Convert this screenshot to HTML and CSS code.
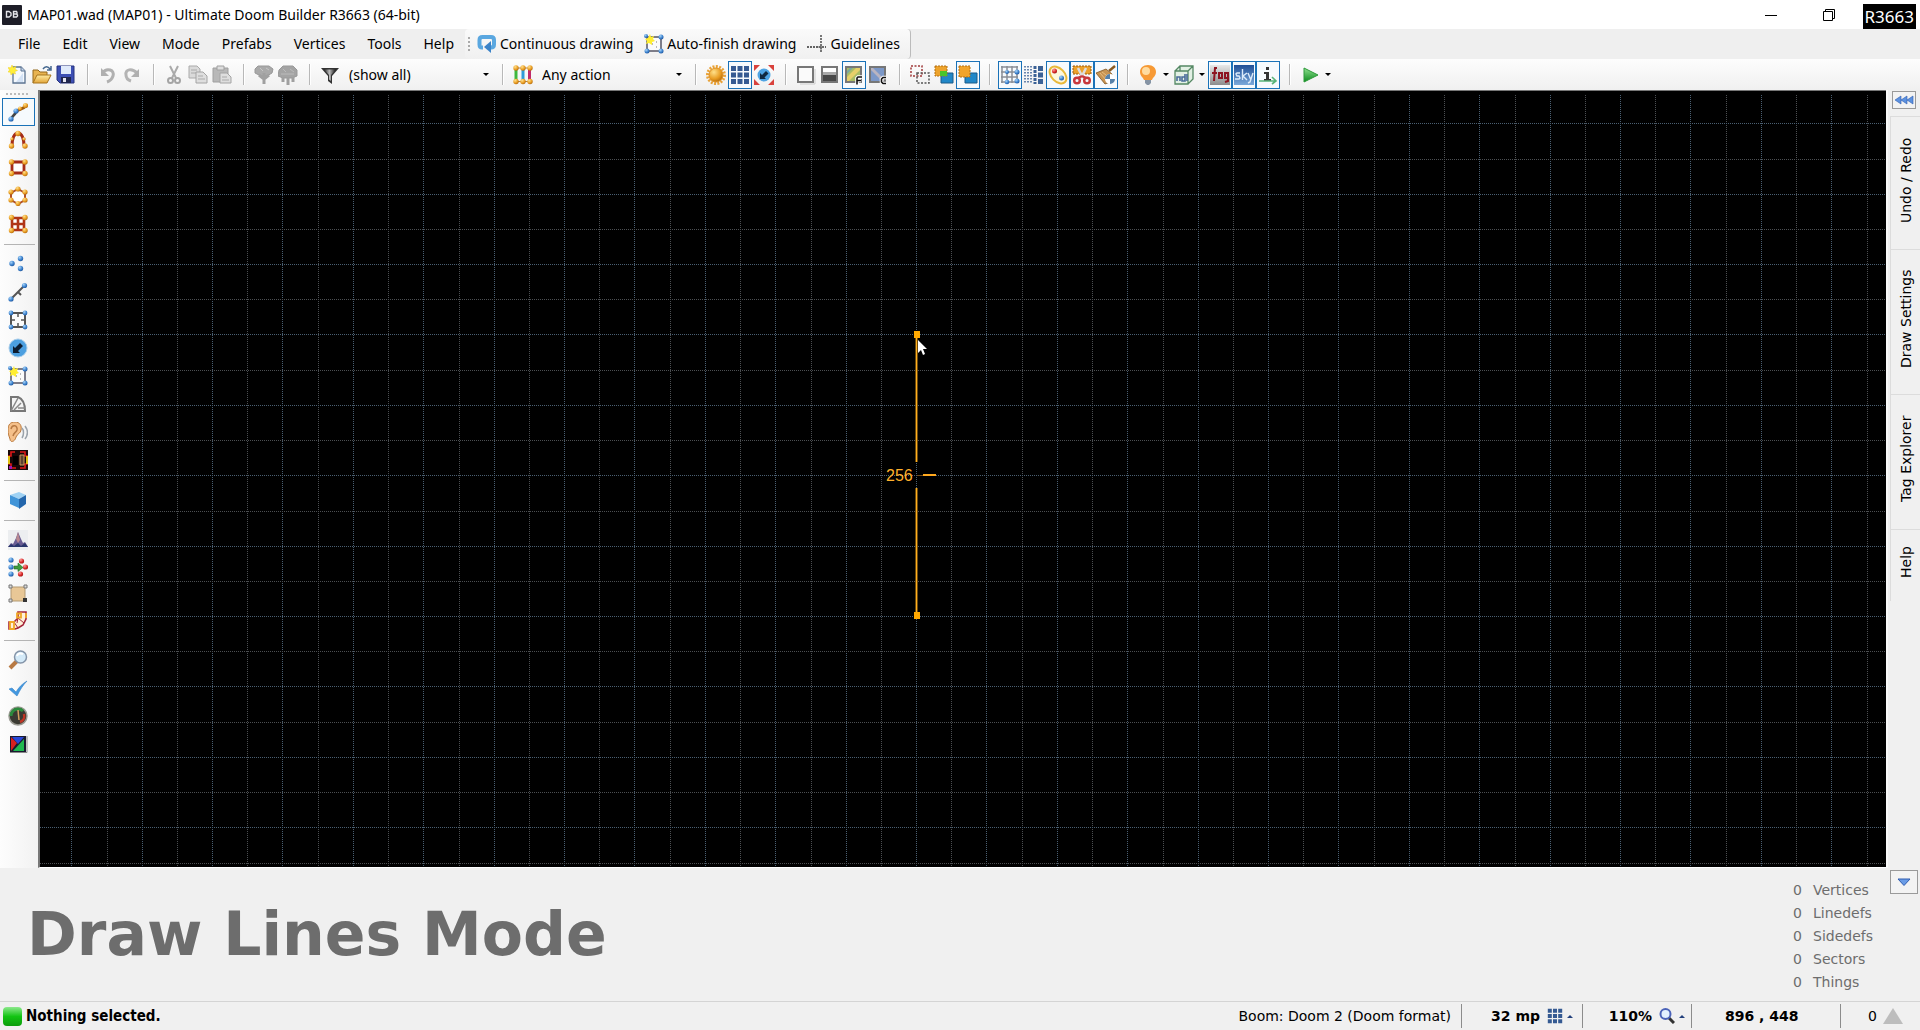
FILE: index.html
```html
<!DOCTYPE html>
<html lang="en">
<head>
<meta charset="utf-8">
<title>MAP01.wad (MAP01) - Ultimate Doom Builder R3663 (64-bit)</title>
<link rel="stylesheet" href="styles.css">
</head>
<body>
<svg class="sprite" aria-hidden="true">
  <defs>
    <radialGradient id="ball" cx=".35" cy=".3" r=".8"><stop offset="0" stop-color="#a8d4f8"/><stop offset=".6" stop-color="#3a80cc"/><stop offset="1" stop-color="#1c4f94"/></radialGradient>
    <radialGradient id="gold" cx=".35" cy=".3" r=".8"><stop offset="0" stop-color="#ffe08a"/><stop offset=".6" stop-color="#e89c22"/><stop offset="1" stop-color="#a86008"/></radialGradient>
    <radialGradient id="red" cx=".35" cy=".3" r=".8"><stop offset="0" stop-color="#ff9c9c"/><stop offset=".6" stop-color="#d82828"/><stop offset="1" stop-color="#901010"/></radialGradient>
    <linearGradient id="sky" x2="0" y2="1"><stop offset="0" stop-color="#1f4f96"/><stop offset="1" stop-color="#7ba9da"/></linearGradient>
    <linearGradient id="fog" x2="0" y2="1"><stop offset="0" stop-color="#e8e8e8"/><stop offset="1" stop-color="#8c8c8c"/></linearGradient>
    <linearGradient id="play" x2="0" y2="1"><stop offset="0" stop-color="#8fe08f"/><stop offset="1" stop-color="#0b8a1c"/></linearGradient>
    <linearGradient id="folder" x2="0" y2="1"><stop offset="0" stop-color="#ffeaa0"/><stop offset="1" stop-color="#e3a63a"/></linearGradient>
    <linearGradient id="funnel" x2="1"><stop offset="0" stop-color="#222"/><stop offset=".45" stop-color="#bbb"/><stop offset="1" stop-color="#111"/></linearGradient>
  </defs>
  <symbol id="i-new" viewBox="0 0 20 20"><path d="M5 2h8l4 4v12H5z" fill="#f4f8fd" stroke="#5b7391" stroke-width="1.3"/><path d="M13 2v4h4" fill="#c4d4e8" stroke="#5b7391"/><path d="M15 8v9H8z" fill="#d3e2f5"/><path d="M4 0l1.200 2.600L8 1.500 7 4.200 9.500 5.500 6.800 6.500 7.500 9 4.600 8 3 10 2.500 7.200 0 7l1.600-2L0 2.600l2.800.2z" fill="#ffef3a" stroke="#f0d020" stroke-width=".5"/></symbol>
  <symbol id="i-open" viewBox="0 0 20 20"><path d="M1 18V5h5l2 2h7v3" fill="#e8b350" stroke="#93681c"/><path d="M1 18l4-8h14l-4 8z" fill="url(#folder)" stroke="#a8741c"/><path d="M11 4c2-3 5-3 7 0M19 1v4h-4" fill="none" stroke="#44678f" stroke-width="1.500"/></symbol>
  <symbol id="i-save" viewBox="0 0 20 20"><path d="M1 1h17v17H4l-3-3z" fill="#3d4fb4" stroke="#27337e"/><path d="M5 1h10v8H5z" fill="#dfe9fa"/><path d="M5 12h10v6H5z" fill="#20264e"/><path d="M7 13h3v4H7z" fill="#e6e6f0"/></symbol>
  <symbol id="i-undo" viewBox="0 0 20 20"><path d="M4 8c5-6 13-3 11 3-1 3-3 5-6 6" fill="none" stroke="#b0b0b0" stroke-width="3"/><path d="M3 3v8h8z" fill="#b0b0b0"/></symbol>
  <symbol id="i-redo" viewBox="0 0 20 20"><path d="M15 8C10 3 3 4 4 10c0 3 2 5 5 6" fill="none" stroke="#b4b4b4" stroke-width="3"/><path d="M17 4v8H9z" fill="#b0b0b0"/></symbol>
  <symbol id="i-cut" viewBox="0 0 20 20"><path d="M6 1l6 12M14 1L8 13" stroke="#aaa" stroke-width="2"/><g fill="none" stroke="#a4a4a4" stroke-width="2"><circle cx="6.500" cy="15.500" r="2.500"/><circle cx="13.500" cy="15.500" r="2.500"/></g></symbol>
  <symbol id="i-copy" viewBox="0 0 20 20"><path d="M1 1h8l3 3v9H1z" fill="#dadada" stroke="#aaa"/><path d="M3 5h6M3 8h5" stroke="#aaa"/><path d="M8 7h7l4 4v7H8z" fill="#dedede" stroke="#a4a4a4"/><path d="M10 11h5M10 14h7" stroke="#aaa"/></symbol>
  <symbol id="i-paste" viewBox="0 0 20 20"><path d="M1 3h15v14H1z" fill="#b8b8b8" stroke="#a0a0a0"/><path d="M5 1h7v4H5z" fill="#ddd" stroke="#a0a0a0"/><path d="M8 8h7l4 4v6H8z" fill="#dedede" stroke="#a4a4a4"/><path d="M10 12h5M10 15h7" stroke="#aaa"/></symbol>
  <symbol id="i-tree" viewBox="0 0 20 20"><path d="M1 4l3-3h11l4 3-1 4-5 3h-6L1 8z" fill="#a9a9a9" stroke="#999"/><path d="M5 10l5 4 5-4M10 8v11" fill="none" stroke="#a0a0a0" stroke-width="3"/><path d="M6 3l3 3M12 3l3 2" stroke="#c6c6c6"/></symbol>
  <symbol id="i-trees" viewBox="0 0 20 20"><path d="M1 5l4-4h10l4 4v6l-5 2H5L0 11z" fill="#a4a4a4" stroke="#999"/><path d="M5 12v5M10 12v8M15 12v5" stroke="#a0a0a0" stroke-width="3"/><path d="M5 4l3 3M12 4l4 3M3 9h13" stroke="#bbb"/></symbol>
  <symbol id="i-filter" viewBox="0 0 20 20"><path d="M1 3h18l-7 8v8l-4-3v-5z" fill="#333"/><path d="M4 4.500h12L11 10v6l-2-1.500V10z" fill="url(#funnel)"/></symbol>
  <symbol id="i-action" viewBox="0 0 20 20"><path d="M3 3v14" stroke="#3eb83e" stroke-width="3"/><path d="M10 3v14" stroke="#2f9ad8" stroke-width="3"/><path d="M16.500 3v14" stroke="#c02a6a" stroke-width="3"/><path d="M3 3h14M3 16.500h14" stroke="#b08040"/><g fill="url(#gold)"><circle cx="3" cy="3" r="2.700"/><circle cx="10" cy="3" r="2.700"/><circle cx="17" cy="3" r="2.700"/><circle cx="3" cy="16.500" r="2.700"/><circle cx="10" cy="16.500" r="2.700"/><circle cx="17" cy="16.500" r="2.700"/></g></symbol>
  <symbol id="i-sun" viewBox="0 0 20 20"><circle cx="10" cy="10" r="8.500" fill="none" stroke="#e8a33a" stroke-width="3" stroke-dasharray="2 1.300"/><circle cx="10" cy="10" r="7" fill="url(#gold)" stroke="#e09020"/></symbol>
  <symbol id="i-grid" viewBox="0 0 20 20"><path d="M1 1h5v5H1zM7.500 1h5v5h-5zM14 1h5v5h-5zM1 7.500h5v5H1zM7.500 7.500h5v5h-5zM14 7.500h5v5h-5zM1 14h5v5H1zM7.500 14h5v5h-5zM14 14h5v5h-5z" fill="#355a92"/></symbol>
  <symbol id="i-thingbox" viewBox="0 0 20 20"><circle cx="10" cy="10" r="6.500" fill="#4fa4e4"/><path d="M6 14V8l2 2 4-4 2.500 2.500-4 4 1.500 1.500z" fill="#102840"/><path d="M0 0h6L0 6zM20 0v6l-6-6zM0 20v-6l6 6zM20 20h-6l6-6z" fill="#d9423c"/></symbol>
  <symbol id="i-wire" viewBox="0 0 20 20"><path d="M2 2h15v15H2z" fill="#fafafa" stroke="#777" stroke-width="2"/><path d="M4 19h15V4" fill="none" stroke="#ccc"/></symbol>
  <symbol id="i-bright" viewBox="0 0 20 20"><path d="M2 2h15v15H2z" fill="#fff" stroke="#777" stroke-width="2"/><path d="M3 7h13v3H3z" fill="#aaa"/><path d="M3 10h13v6H3z" fill="#484848"/></symbol>
  <symbol id="i-floor" viewBox="0 0 20 20"><path d="M2 2h15v15H2z" fill="#a9bd66" stroke="#777" stroke-width="2"/><path d="M3 12L12 3h4v2L5 16H3z" fill="#e6d06a"/><path d="M3 6l3-3h3L3 9z" fill="#7aa7a0"/><path d="M13 19v-6l1-1h4M13 15.500h4" fill="none" stroke="#fff" stroke-width="3.500"/><path d="M13 19.500V13l1-1h4M13 15.500h4" fill="none" stroke="#111" stroke-width="1.600"/></symbol>
  <symbol id="i-ceil" viewBox="0 0 20 20"><path d="M2 2h15v15H2z" fill="#7c98c8" stroke="#777" stroke-width="2"/><path d="M3 5l11 11h2v-2L5 3H3z" fill="#b9b4c0"/><path d="M18 12.500h-3l-1.500 1.500v3l1.500 1.500h3" fill="none" stroke="#fff" stroke-width="3.500"/><path d="M18 12.500h-3l-1.500 1.500v3l1.500 1.500h3" fill="none" stroke="#111" stroke-width="1.600"/></symbol>
  <symbol id="i-merge0" viewBox="0 0 20 20"><path d="M1 1h11v10H1z" fill="none" stroke="#a03a3a" stroke-width="1.500" stroke-dasharray="2 1.500"/><path d="M7 8h12v10H7z" fill="none" stroke="#555" stroke-width="1.500" stroke-dasharray="2 1.500"/></symbol>
  <symbol id="i-merge1" viewBox="0 0 20 20"><path d="M7 8h12v10H7z" fill="#2087c8" stroke="#1a5a88"/><path d="M1 1h12v10H1z" fill="#eda32c" stroke="#b26f12" stroke-dasharray="2 1"/><path d="M6 6h7v5H6z" fill="#49c42a"/></symbol>
  <symbol id="i-merge2" viewBox="0 0 20 20"><path d="M7 8h12v10H7z" fill="#2087c8" stroke="#1a5a88"/><path d="M1 1h11v11H1z" fill="#f2a42a" stroke="#b26f12" stroke-dasharray="2 1"/></symbol>
  <symbol id="i-snap" viewBox="0 0 20 20"><path d="M2 1v17M7 1v17M12 1v17M17 1v17M1 2h17M1 7h17M1 12h17M1 17h17" stroke="#8a8f96" stroke-width="1.500"/><g fill="url(#ball)"><circle cx="7" cy="7" r="2"/><circle cx="17" cy="7" r="2.500"/><circle cx="7" cy="17" r="2.300"/><circle cx="17" cy="16" r="2.500"/></g></symbol>
  <symbol id="i-dyn" viewBox="0 0 20 20"><path d="M1 1v18M4 1v18M7 1v18" stroke="#3c6296" stroke-width="1.500" stroke-dasharray="1.500 1.500"/><path d="M11 1v18" stroke="#3c6296" stroke-width="3" stroke-dasharray="3 1"/><path d="M16.500 1v18" stroke="#3c6296" stroke-width="5" stroke-dasharray="5 1.500"/></symbol>
  <symbol id="i-link" viewBox="0 0 20 20"><ellipse cx="10" cy="10" rx="10" ry="6.500" transform="rotate(45 10 10)" fill="#fdf8dc" stroke="#e8b93a" stroke-width="2"/><circle cx="6.500" cy="6" r="2.500" fill="url(#red)"/><circle cx="13.500" cy="13" r="2.500" fill="url(#ball)"/></symbol>
  <symbol id="i-split" viewBox="0 0 20 20"><path d="M1 1h18v8H1z" fill="#eca12c" stroke="#9a5a0c" stroke-dasharray="2 1"/><path d="M6 3l5 10M14 3L9 13" stroke="#ddd" stroke-width="2.500" fill="none"/><path d="M10 11l-4 2M10 11l4 2" stroke="#c8383c" stroke-width="2.500"/><g fill="none" stroke="#c8383c" stroke-width="2.500"><circle cx="5" cy="15.500" r="2.800"/><circle cx="15" cy="15.500" r="2.800"/></g></symbol>
  <symbol id="i-broom" viewBox="0 0 20 20"><path d="M19 1l-6 5" stroke="#8a5a20" stroke-width="2.500"/><path d="M10 4l6 5-2 8-5 2L0 8z" fill="#c89452" stroke="#7e5622" stroke-width=".8"/><path d="M6 7l8 6M4 8l7 8" stroke="#e6bd80"/><circle cx="14" cy="14" r="5" fill="#fff"/><path d="M14 14V9a5 5 0 0 0-5 5zM14 14v5a5 5 0 0 0 5-5z" fill="#5580a8"/></symbol>
  <symbol id="i-bulb" viewBox="0 0 20 20"><path d="M10 0c5 0 8 3 8 7s-3 5-4 8H6C5 12 2 11 2 7s3-7 8-7z" fill="#f79a35"/><circle cx="8" cy="6" r="4" fill="#ffdca0"/><path d="M7 15h6v3l-2 2H9l-2-2z" fill="#8694a4"/></symbol>
  <symbol id="i-model" viewBox="0 0 20 20"><path d="M1 6h13v13H1zM1 6l5-5h13v13l-5 5M14 6l5-5M6 1v5" fill="#e2f0e4" stroke="#558864" stroke-width="1.300"/><path d="M3 16v-4h3v4M11 12H8v4h3V9M13 9v7" fill="none" stroke="#4a6c9a" stroke-width="1.600"/></symbol>
  <symbol id="i-fog" viewBox="0 0 20 20"><path d="M0 0h20v20H0z" fill="url(#fog)"/><path d="M7 3H5L4 16M2 8h5M9 8h3v5H9zM18 8h-3v5h3zM18 7v9l-3 1" fill="none" stroke="#8d1420" stroke-width="2"/></symbol>
  <symbol id="i-sky" viewBox="0 0 20 20"><path d="M0 0h20v20H0z" fill="url(#sky)"/><path d="M6 8H3L2 9l1 2h2l1 2-1 1H1M8.500 4v11M13 8l-4 3 4 4M14 8l2.500 6M19 8l-3 9-2 1" fill="none" stroke="#dcebfa" stroke-width="1.400"/></symbol>
  <symbol id="i-info" viewBox="0 0 20 20"><path d="M8 2h3v3H8zM6 7h5v7h2v2H6v-2h2V9H6z" fill="#333"/><path d="M1 16h17M14 12l4 4-4 3" fill="none" stroke="#58b478" stroke-width="1.600"/></symbol>
  <symbol id="i-play" viewBox="0 0 20 20"><path d="M4 3l14 7-14 7z" fill="url(#play)" stroke="#2d9a3a"/></symbol>
  <symbol id="i-cont" viewBox="0 0 20 20"><path d="M6 13.500H5c-2 0-2.500-1-2.500-3V6c0-2 1-3 3-3h8.500c2 0 3 1 3 3v4.500c0 2-1 3-3 3" fill="none" stroke="#5aa7e0" stroke-width="4"/><path d="M14 7v12l-7-6z" fill="#3b83c8"/></symbol>
  <symbol id="i-auto" viewBox="0 0 20 20"><path d="M3 3h14v14H3z" fill="#fbfbfb" stroke="#556" stroke-width="1.500"/><path d="M8 10h1M12 8h1M12 13h1" stroke="#777"/><g fill="url(#ball)"><circle cx="17" cy="3" r="2.500"/><circle cx="3" cy="17" r="2.500"/><circle cx="17" cy="17" r="2.500"/><circle cx="2" cy="2" r="2"/></g><path d="M6 0l1 3 3-1-1 3 2 2-3 1v3l-3-2-3 1 1-3-2-2 3-1z" fill="#ffee32"/></symbol>
  <symbol id="i-guide" viewBox="0 0 20 20"><path d="M14 1v18M0 13h19" stroke="#333" stroke-width="1.300" stroke-dasharray="2 1"/><path d="M11 13h6M14 10v6" stroke="#777"/></symbol>
  <symbol id="i-lines" viewBox="0 0 20 20"><path d="M3 17c1-3 4-4 5-7" stroke="#444" stroke-width="2.500" fill="none"/><path d="M8 10c3-4 6-2 10-6" stroke="#9b5a10" stroke-width="3" fill="none"/><circle cx="3" cy="17" r="2.600" fill="url(#ball)"/><circle cx="8" cy="9" r="2.600" fill="url(#ball)"/><circle cx="12" cy="6.500" r="2" fill="url(#gold)"/><circle cx="17.500" cy="3.500" r="2.600" fill="url(#gold)"/></symbol>
  <symbol id="i-curve" viewBox="0 0 20 20"><path d="M4 16C4 9 6 3 10 3s6 6 6 13" fill="none" stroke="#a52c18" stroke-width="3"/><g fill="url(#gold)"><circle cx="10" cy="3.500" r="2.700"/><circle cx="4" cy="9" r="1.700"/><circle cx="16" cy="9" r="1.700"/><circle cx="3.500" cy="16" r="2.700"/><circle cx="17" cy="16" r="2.700"/></g></symbol>
  <symbol id="i-rect" viewBox="0 0 20 20"><path d="M4 4h12v11H4z" fill="#fff" stroke="#a52c18" stroke-width="2.800"/><g fill="url(#gold)"><circle cx="3.500" cy="4" r="2.700"/><circle cx="17" cy="4" r="2.700"/><circle cx="3.500" cy="15.500" r="2.700"/><circle cx="17" cy="15.500" r="2.700"/></g></symbol>
  <symbol id="i-ellipse" viewBox="0 0 20 20"><path d="M10 3l7 4v7l-7 4-7-4V7z" fill="#fff" stroke="#b0502a" stroke-width="2"/><g fill="url(#gold)"><circle cx="10" cy="3" r="2.600"/><circle cx="17" cy="6" r="2.600"/><circle cx="17" cy="14" r="2.600"/><circle cx="10" cy="17.500" r="2.600"/><circle cx="3" cy="14" r="2.600"/><circle cx="3" cy="6" r="2.600"/></g></symbol>
  <symbol id="i-mesh" viewBox="0 0 20 20"><path d="M4 4h12v12H4zM10 4v12M4 10h12" fill="#fff" stroke="#b03418" stroke-width="2.600"/><g fill="url(#gold)"><circle cx="3.500" cy="3.500" r="2.700"/><circle cx="17" cy="3.500" r="2.700"/><circle cx="3.500" cy="16.500" r="2.700"/><circle cx="17" cy="16.500" r="2.700"/></g></symbol>
  <symbol id="i-verts" viewBox="0 0 20 20"><g fill="url(#ball)"><circle cx="12.500" cy="4.500" r="2.700"/><circle cx="4" cy="9.500" r="2.700"/><circle cx="12.500" cy="14.500" r="2.700"/></g></symbol>
  <symbol id="i-linedef" viewBox="0 0 20 20"><path d="M3 17L16 4M10 10l3 3" stroke="#555" stroke-width="2"/><circle cx="3" cy="17" r="2.600" fill="url(#ball)"/><circle cx="16.500" cy="3.500" r="2.600" fill="url(#ball)"/></symbol>
  <symbol id="i-sector" viewBox="0 0 20 20"><path d="M3 3h14v14H3z" fill="#fbfbfb" stroke="#555" stroke-width="2"/><path d="M10 4v3M10 16v-3M4 10h3M16 10h-3" stroke="#555" stroke-width="1.500"/><g fill="url(#ball)"><circle cx="3" cy="3" r="2.400"/><circle cx="17" cy="3" r="2.400"/><circle cx="3" cy="17" r="2.400"/><circle cx="17" cy="17" r="2.400"/></g></symbol>
  <symbol id="i-thing" viewBox="0 0 20 20"><circle cx="10" cy="10" r="9" fill="#4c9fe0" stroke="#a8cdea"/><path d="M5 15V8l2 2 5-5 3 3-5 5 2 2z" fill="#0c1c30"/></symbol>
  <symbol id="i-bridge" viewBox="0 0 20 20"><path d="M3 3h7c5 2 7 7 7 14H3z" fill="#f4f4f4" stroke="#777" stroke-width="2"/><path d="M3 17L10 4M6 16l7-7M10 14h7" stroke="#888" stroke-width="1.500"/></symbol>
  <symbol id="i-ear" viewBox="0 0 20 20"><path d="M0 8c0-5 2-8 7-8s7 4 6 8c0 3-4 4-5 7-1 5-6 6-6 2-1-3-2-5-2-9z" fill="#f5c08a" stroke="#b8783c"/><path d="M3 7c1-5 7-4 6 1-1 3-3 2-4 6" fill="none" stroke="#b87a44" stroke-width="1.500"/><path d="M14 6c2 2 2 7 0 10M17 4c3 4 3 9 0 13" fill="none" stroke="#9aa2aa" stroke-width="1.500"/></symbol>
  <symbol id="i-sound" viewBox="0 0 20 20"><path d="M0 0h20v20H0z" fill="#180808"/><path d="M7 2H3v4H1v8h2v4h5M12 2h5v4h2v8h-2v4h-5" fill="none" stroke="#e01818" stroke-width="1.600"/><path d="M1 6v8M19 6v8" stroke="#e0c010" stroke-width="2"/><path d="M12 5h4v10h-4z" fill="#5c4030" stroke="#c89a5c"/><path d="M5 6h5v9H5z" fill="#000"/><path d="M1 16h3v3H1z" fill="#a018b8"/></symbol>
  <symbol id="i-cube" viewBox="0 0 20 20"><path d="M2 5l9-3 7 3-7 4z" fill="#9fd2f4"/><path d="M2 5l9 4v9l-9-4z" fill="#4094d8"/><path d="M11 9l7-4v9l-7 5z" fill="#2466ac"/></symbol>
  <symbol id="i-mount" viewBox="0 0 20 20"><path d="M0 0h20v20H0z" fill="#eceef0"/><path d="M0 17l3-4 2 1 3-6 2-6 3 7 2 4 2-1 3 5z" fill="#685c92"/><path d="M8 9l2-7 2 8-2 3z" fill="#b88890"/><path d="M0 17l3-3 3 2 4-3 3 3 4-3 3 4z" fill="#28356c"/></symbol>
  <symbol id="i-stairs" viewBox="0 0 20 20"><g fill="url(#ball)"><circle cx="3" cy="3" r="2.600"/><circle cx="3" cy="10" r="2.600"/><circle cx="3" cy="17" r="2.600"/></g><g fill="url(#red)"><circle cx="13.500" cy="4" r="2.600"/><circle cx="17.500" cy="10" r="2.600"/><circle cx="12.500" cy="17" r="2.600"/></g><path d="M6 9h4V6l5 4.500-5 4V12H6z" fill="#3f9c3c" stroke="#1e6a22" stroke-width=".6"/></symbol>
  <symbol id="i-tan" viewBox="0 0 20 20"><path d="M3 3h14v14H3z" fill="#e8c796" stroke="#b39a72"/><g fill="#ddd" stroke="#777"><path d="M1 1h3v3H1zM16 1h3v3h-3zM1 15h3v3H1z"/></g><path d="M15 14h4v4h-4z" fill="#333"/></symbol>
  <symbol id="i-path" viewBox="0 0 20 20"><path d="M10 1h8v7l-3 6-5 3-3 1H1v-7h5l4-4z" fill="#fff0d8" stroke="#a5263a" stroke-width="1.600"/><path d="M10 7l6 5M6 11l4 6M10 7l-1 5" stroke="#a5263a" fill="none"/><g fill="none" stroke="#f0a828" stroke-width="1.800"><path d="M9 2.500h4v4H9zM18 2v5M2 11h4v7H2z"/></g></symbol>
  <symbol id="i-search" viewBox="0 0 20 20"><path d="M9 11l-7 7" stroke="#b87a44" stroke-width="4"/><circle cx="12.500" cy="7" r="6" fill="#d4eaf8" stroke="#8494a8" stroke-width="1.500"/><path d="M9 6c1-3 4-3 6-2" fill="none" stroke="#fff" stroke-width="2"/></symbol>
  <symbol id="i-check" viewBox="0 0 20 20"><path d="M1 11l3-1 4 4c3-5 6-8 11-11-4 4-7 9-10 15z" fill="#4298e0" stroke="#3a84c8" stroke-width=".6"/></symbol>
  <symbol id="i-gauge" viewBox="0 0 20 20"><circle cx="10" cy="10" r="9" fill="#3a3a32" stroke="#9a9a92" stroke-width="1.500"/><path d="M3 10c0-4 3-7 7-7 2 0 4 1 5 2" fill="none" stroke="#2c8a3c" stroke-width="3"/><path d="M16 8c1 4-1 7-4 8" fill="none" stroke="#c03424" stroke-width="2.500"/><path d="M10 4l1 10" stroke="#d4a060" stroke-width="1.500"/></symbol>
  <symbol id="i-rgb" viewBox="0 0 20 20"><path d="M2 2h16v16H2z" fill="#1a1a30"/><path d="M3 3l6 6-6 8z" fill="#d82020"/><path d="M4 3h12l-6 7z" fill="#2848d8"/><path d="M16 5v12H5z" fill="#20b850"/><path d="M2 18.500h17V2" fill="none" stroke="#888"/></symbol>
  <symbol id="i-zoom" viewBox="0 0 16 16"><path d="M10 10l5 5" stroke="#333" stroke-width="3"/><circle cx="6.500" cy="6" r="5" fill="#e2f0ff" stroke="#4a62b8" stroke-width="2"/></symbol>
</svg>

<header class="titlebar">
  <svg class="logo" viewBox="0 0 20 20"><rect width="20" height="20" rx="1" fill="#1e1e28"/><path d="M4.500 6.500H7L9 8v2.500L7 12H4.500zM11.500 6.500h3l.5 1v1l-.5.500h-3zM11.500 9h3l1 1v1l-1 1h-3z" fill="none" stroke="#e6e6ea" stroke-width="1.400"/></svg>
  <h1 class="title">MAP01.wad (MAP01) - Ultimate Doom Builder R3663 (64-bit)</h1>
  <button class="winbtn" aria-label="Minimize"><svg width="14" height="14" viewBox="0 0 14 14"><path d="M1 7.500h12" stroke="#000"/></svg></button>
  <button class="winbtn" aria-label="Restore"><svg width="14" height="14" viewBox="0 0 14 14"><path d="M1.500 3.500h9v9h-9zM3.500 3V1.500h9v9H11" fill="none" stroke="#000"/></svg></button>
  <span class="badge">R3663</span>
</header>

<div class="menurow">
  <nav class="menu">
    <button>File</button><button>Edit</button><button>View</button><button>Mode</button><button>Prefabs</button><button>Vertices</button><button>Tools</button><button>Help</button>
  </nav>
  <div class="drawbar">
    <span class="grip"></span>
    <button><svg class="ic"><use href="#i-cont"/></svg>Continuous drawing</button>
    <button><svg class="ic"><use href="#i-auto"/></svg>Auto-finish drawing</button>
    <button><svg class="ic"><use href="#i-guide"/></svg>Guidelines</button>
  </div>
</div>

<div class="toolbar" role="toolbar">
  <button aria-label="New"><svg class="ic"><use href="#i-new"/></svg></button>
  <button aria-label="Open"><svg class="ic"><use href="#i-open"/></svg></button>
  <button aria-label="Save"><svg class="ic"><use href="#i-save"/></svg></button>
  <i class="sep"></i>
  <button aria-label="Undo"><svg class="ic"><use href="#i-undo"/></svg></button>
  <button aria-label="Redo"><svg class="ic"><use href="#i-redo"/></svg></button>
  <i class="sep"></i>
  <button aria-label="Cut"><svg class="ic"><use href="#i-cut"/></svg></button>
  <button aria-label="Copy"><svg class="ic"><use href="#i-copy"/></svg></button>
  <button aria-label="Paste"><svg class="ic"><use href="#i-paste"/></svg></button>
  <i class="sep"></i>
  <button aria-label="Insert prefab"><svg class="ic"><use href="#i-tree"/></svg></button>
  <button aria-label="Insert previous prefab"><svg class="ic"><use href="#i-trees"/></svg></button>
  <i class="sep"></i>
  <button aria-label="Things filter"><svg class="ic"><use href="#i-filter"/></svg></button>
  <span class="combo"><select aria-label="Things filter"><option>(show all)</option></select></span>
  <i class="sep"></i>
  <button aria-label="Linedef color presets"><svg class="ic"><use href="#i-action"/></svg></button>
  <span class="combo"><select aria-label="Linedef color preset"><option>Any action</option></select></span>
  <i class="sep"></i>
  <button aria-label="Full brightness"><svg class="ic"><use href="#i-sun"/></svg></button>
  <button class="on" aria-label="Grid"><svg class="ic"><use href="#i-grid"/></svg></button>
  <button aria-label="Fixed things scale"><svg class="ic"><use href="#i-thingbox"/></svg></button>
  <i class="sep"></i>
  <button aria-label="Wireframe"><svg class="ic"><use href="#i-wire"/></svg></button>
  <button aria-label="Brightness levels"><svg class="ic"><use href="#i-bright"/></svg></button>
  <button class="on" aria-label="Floor textures"><svg class="ic"><use href="#i-floor"/></svg></button>
  <button aria-label="Ceiling textures"><svg class="ic"><use href="#i-ceil"/></svg></button>
  <i class="sep"></i>
  <button aria-label="Merge dragged vertices"><svg class="ic"><use href="#i-merge0"/></svg></button>
  <button aria-label="Merge dragged geometry"><svg class="ic"><use href="#i-merge1"/></svg></button>
  <button class="on" aria-label="Replace with dragged geometry"><svg class="ic"><use href="#i-merge2"/></svg></button>
  <i class="sep"></i>
  <button class="on" aria-label="Snap to grid"><svg class="ic"><use href="#i-snap"/></svg></button>
  <button aria-label="Dynamic grid"><svg class="ic"><use href="#i-dyn"/></svg></button>
  <button class="on" aria-label="Synchronized things"><svg class="ic"><use href="#i-link"/></svg></button>
  <button class="on" aria-label="Split joined sectors"><svg class="ic"><use href="#i-split"/></svg></button>
  <button class="on" aria-label="Auto clear sidedefs"><svg class="ic"><use href="#i-broom"/></svg></button>
  <i class="sep"></i>
  <button aria-label="Dynamic lights"><svg class="ic"><use href="#i-bulb"/></svg></button>
  <button class="drop" aria-label="Lights options"></button>
  <button aria-label="Models"><svg class="ic"><use href="#i-model"/></svg></button>
  <button class="drop" aria-label="Models options"></button>
  <button class="on" aria-label="Fog"><svg class="ic"><use href="#i-fog"/></svg></button>
  <button class="on" aria-label="Sky"><svg class="ic"><use href="#i-sky"/></svg></button>
  <button class="on" aria-label="Event lines"><svg class="ic"><use href="#i-info"/></svg></button>
  <i class="sep"></i>
  <button aria-label="Test map"><svg class="ic"><use href="#i-play"/></svg></button>
  <button class="drop" aria-label="Test options"></button>
</div>

<main class="workspace">
  <aside class="modes">
    <span class="hgrip"></span>
    <div class="group">
      <button class="on" aria-label="Draw lines"><svg class="ic"><use href="#i-lines"/></svg></button>
      <button aria-label="Draw curve"><svg class="ic"><use href="#i-curve"/></svg></button>
      <button aria-label="Draw rectangle"><svg class="ic"><use href="#i-rect"/></svg></button>
      <button aria-label="Draw ellipse"><svg class="ic"><use href="#i-ellipse"/></svg></button>
      <button aria-label="Draw grid"><svg class="ic"><use href="#i-mesh"/></svg></button>
    </div>
    <div class="group">
      <button aria-label="Vertices mode"><svg class="ic"><use href="#i-verts"/></svg></button>
      <button aria-label="Linedefs mode"><svg class="ic"><use href="#i-linedef"/></svg></button>
      <button aria-label="Sectors mode"><svg class="ic"><use href="#i-sector"/></svg></button>
      <button aria-label="Things mode"><svg class="ic"><use href="#i-thing"/></svg></button>
      <button aria-label="Make sectors mode"><svg class="ic"><use href="#i-auto"/></svg></button>
      <button aria-label="Bridge mode"><svg class="ic"><use href="#i-bridge"/></svg></button>
      <button aria-label="Sound propagation"><svg class="ic"><use href="#i-ear"/></svg></button>
      <button aria-label="Sound environment"><svg class="ic"><use href="#i-sound"/></svg></button>
    </div>
    <div class="group">
      <button aria-label="Visual mode"><svg class="ic"><use href="#i-cube"/></svg></button>
    </div>
    <div class="group compact">
      <button aria-label="Import terrain"><svg class="ic"><use href="#i-mount"/></svg></button>
      <button aria-label="Randomize"><svg class="ic"><use href="#i-stairs"/></svg></button>
      <button aria-label="Edit selection"><svg class="ic"><use href="#i-tan"/></svg></button>
      <button aria-label="Curve linedefs"><svg class="ic"><use href="#i-path"/></svg></button>
    </div>
    <div class="group">
      <button aria-label="Find and replace"><svg class="ic"><use href="#i-search"/></svg></button>
      <button aria-label="Map analysis"><svg class="ic"><use href="#i-check"/></svg></button>
      <button aria-label="Usage gauge"><svg class="ic"><use href="#i-gauge"/></svg></button>
      <button aria-label="Color picker"><svg class="ic"><use href="#i-rgb"/></svg></button>
    </div>
  </aside>

  <div class="canvas">
    <svg class="map" shape-rendering="crispEdges">
      <defs>
        <pattern id="columns" patternUnits="userSpaceOnUse" x="31" y="4" width="352" height="2">
          <path d="M0 0h1v1h-1zM71 0h1v1h-1zM141 0h1v1h-1zM211 0h1v1h-1zM282 0h1v1h-1z" fill="#4a5f72"/>
          <path d="M36 0h1v1h-1zM106 0h1v1h-1zM176 0h1v1h-1zM247 0h1v1h-1zM317 0h1v1h-1z" fill="#4c4f52"/>
        </pattern>
        <pattern id="rows" patternUnits="userSpaceOnUse" x="0" y="32" width="2" height="352">
          <path d="M0 0h1v1H0zM0 71h1v1H0zM0 141h1v1H0zM0 211h1v1H0zM0 282h1v1H0z" fill="#4a5f72"/>
          <path d="M0 36h1v1H0zM0 106h1v1H0zM0 176h1v1H0zM0 247h1v1H0zM0 317h1v1H0z" fill="#4c4f52"/>
        </pattern>
      </defs>
      <rect y="4" width="100%" height="100%" fill="url(#columns)"/>
      <rect width="100%" height="100%" fill="url(#rows)"/>
      <path d="M876.500 243v128M876.500 397v128" stroke="#6e4a0c" stroke-width="3"/>
      <path d="M876.500 243v128M876.500 397v128" stroke="#ffb01e"/>
      <path d="M877 384.500h6" stroke="#6e4a1c"/>
      <path d="M883 384h13" stroke="#ffa81e" stroke-width="2"/>
      <path d="M874 240h6v7h-6zM874 521h6v7h-6z" fill="#ffa800"/>
      <text x="846" y="390" class="len">256</text>
      <path d="M878 249v13l3-3 2 5 2-1-2-5h4z" fill="#fff" shape-rendering="auto"/>
    </svg>
  </div>

  <aside class="dock">
    <button class="expand" aria-label="Expand panel"><svg width="20" height="12" viewBox="0 0 20 12"><path d="M7 2v8L1 6zM13 2v8L7 6zM19 2v8l-6-4z" fill="#5c92e0" stroke="#2f5cb0" stroke-width=".6"/></svg></button>
    <button class="tab t1">Undo / Redo</button>
    <button class="tab t2">Draw Settings</button>
    <button class="tab t3">Tag Explorer</button>
    <button class="tab t4">Help</button>
  </aside>
</main>

<section class="info">
  <h2 class="mode">Draw Lines Mode</h2>
  <table class="counts">
    <tr><td>0</td><th scope="row">Vertices</th></tr>
    <tr><td>0</td><th scope="row">Linedefs</th></tr>
    <tr><td>0</td><th scope="row">Sidedefs</th></tr>
    <tr><td>0</td><th scope="row">Sectors</th></tr>
    <tr><td>0</td><th scope="row">Things</th></tr>
  </table>
  <button class="collapse" aria-label="Collapse info panel"><svg width="14" height="8" viewBox="0 0 14 8"><path d="M1 1h12L7 7.500z" fill="#6a9ce6" stroke="#2f5cb0"/></svg></button>
</section>

<footer class="status">
  <span class="led"></span>
  <span class="msg">Nothing selected.</span>
  <span class="cell config">Boom: Doom 2 (Doom format)</span>
  <button class="cell gridsize">32 mp<svg class="s1" viewBox="0 0 20 20"><use href="#i-grid"/></svg><i class="up"></i></button>
  <button class="cell zoom">110%<svg class="s1" viewBox="0 0 16 16"><use href="#i-zoom"/></svg><i class="up"></i></button>
  <span class="cell coords">896 , 448</span>
  <span class="cell warn">0<svg width="20" height="16" viewBox="0 0 20 16"><path d="M10 0l10 16H0z" fill="#bdbdbd"/></svg></span>
</footer>
</body>
</html>
```
FILE: styles.css
```css
* { box-sizing: border-box; }

body {
  margin: 0;
  min-height: 100vh;
  display: flex;
  flex-direction: column;
  background: #f0f0f0;
  color: #000;
  font: 14px/20px "Noto Sans", "Open Sans", sans-serif;
}

button {
  margin: 0;
  padding: 0;
  border: 1px solid transparent;
  background: none;
  color: inherit;
  font: inherit;
}

.sprite { display: block; width: 0; height: 0; }
.ic { display: block; width: 20px; height: 20px; flex: none; }

/* Title bar */
.titlebar {
  display: flex;
  align-items: center;
  height: 29px;
  padding: 0 4px 0 2px;
  background: #fff;
}
.logo { width: 20px; height: 20px; }
.title { flex: 1; margin: 0 0 0 5px; font-size: 14px; font-weight: 400; }
.winbtn { width: 58px; height: 28px; display: grid; place-items: center; }
.badge {
  height: 26px;
  margin: 5px 0 0 5px;
  padding: 0 2px;
  background: #000;
  color: #fff;
  font-size: 17px;
  line-height: 26px;
}

/* Menu */
.menurow { display: flex; height: 30px; background: #efefef; }
.menu { display: flex; padding-left: 7px; width: 465px; }
.menu button { padding: 0 10px; }
.drawbar {
  display: flex;
  align-items: center;
  padding-right: 9px;
  border-right: 1px solid #bbb;
  border-radius: 4px;
  background: linear-gradient(#fafafa, #f0f0f0);
}
.drawbar button { display: flex; align-items: center; gap: 3px; margin-right: 9px; }
.drawbar button:last-child { margin-right: 0; }
.grip { width: 2px; height: 14px; margin: 0 6px 0 3px; background: repeating-linear-gradient(#aaa 0 2px, transparent 2px 4px); }

/* Main toolbar */
.toolbar {
  display: flex;
  align-items: center;
  height: 31px;
  padding-left: 6px;
  background: linear-gradient(#fdfdfd, #f0f0f0);
}
.toolbar button { width: 24px; height: 28px; display: grid; place-items: center; flex: none; }
.toolbar .on, .modes .on { border-color: #1a72b8; background: #f6fafd; }
.toolbar .drop { width: 12px; }
.drop::after, .combo::after {
  content: "";
  border: 3px solid transparent;
  border-top: 3px solid #000;
  border-bottom: 0;
}
.sep { width: 1px; height: 21px; margin: 0 8px 0 9px; background: #b8b8b8; box-shadow: 1px 0 #fff; flex: none; }
.combo { width: 151px; display: flex; align-items: center; padding-right: 4px; }
.combo select {
  flex: 1;
  min-width: 0;
  height: 26px;
  padding: 0 0 0 7px;
  border: 0;
  appearance: none;
  background: none;
  color: inherit;
  font: inherit;
}

/* Work area */
.workspace { flex: 1; display: flex; min-height: 0; }
.modes {
  width: 38px;
  padding: 3px 0 0 2px;
  background: linear-gradient(90deg, #fdfdfd, #f2f2f2);
}
.hgrip { display: block; width: 22px; height: 2px; margin: 0 0 3px 4px; background: repeating-linear-gradient(90deg, #bbb 0 2px, transparent 2px 4px); }
.modes button { width: 33px; height: 28px; display: grid; place-items: center start; padding-left: 5px; }
.modes .compact button { height: 27px; }
.group + .group { margin: 6px 3px 0 2px; border-top: 1px solid #b4b4b4; padding-top: 5px; }
.group + .group button { margin-left: -2px; }
.canvas {
  flex: 1;
  min-width: 0;
  display: grid;
  border-top: 1px solid #777;
  border-left: 2px solid #777;
  border-bottom: 1px solid #fff;
  background: #000;
}
.map { width: 100%; height: 100%; min-height: 0; display: block; }
.len { font: 16px "Liberation Sans", Arial, sans-serif; fill: #ffb02c; }

.dock { width: 34px; border-left: 2px solid #fafafa; padding: 1px 0 0 2px; }
.expand, .collapse { border: 1px solid #9a9a9a; background: #f3f3f3; display: grid; place-items: center; }
.expand { width: 24px; height: 18px; margin: 0 0 7px 2px; }
.tab {
  display: grid;
  place-items: center;
  width: 30px;
  padding-top: 6px;
  border: 0;
  border-right: 1px solid #dcdcdc;
  border-bottom: 1px solid #dcdcdc;
  writing-mode: vertical-rl;
  transform: rotate(180deg);
  font: 14px/20px "DejaVu Sans", sans-serif;
}
.t1 { height: 133px; }
.t2 { height: 145px; }
.t3 { height: 135px; }
.t4 { height: 72px; }

/* Info panel */
.info {
  display: flex;
  align-items: flex-start;
  height: 134px;
  border-bottom: 1px solid #d4d4d4;
  color: #6d6d6d;
}
.mode { flex: 1; margin: 31px 0 0 27px; font: bold 60px/70px "DejaVu Sans", Verdana, sans-serif; }
.counts { margin: 11px 0 0; width: 97px; border-spacing: 0; font: 14px/23px "DejaVu Sans", sans-serif; }
.counts td { width: 20px; padding: 0; }
.counts th { padding: 0; text-align: left; font-weight: 400; }
.collapse { width: 28px; height: 24px; margin: 2px 2px 0 0; }

/* Status bar */
.status {
  display: flex;
  align-items: center;
  height: 28px;
  font: 14px/24px "DejaVu Sans", sans-serif;
}
.led { width: 19px; height: 19px; margin: 0 4px 0 3px; border-radius: 4px; background: linear-gradient(#8ce88c, #12c412 50%, #0c9c0c); }
.msg { flex: 1; font: bold 15px/24px "DejaVu Sans Condensed", "DejaVu Sans", sans-serif; }
.cell { display: flex; align-items: center; height: 24px; border: 0; border-right: 1px solid #8c8c8c; }
.config { padding-right: 10px; }
.gridsize, .zoom { justify-content: flex-end; gap: 7px; padding-right: 9px; font-weight: 700; }
.gridsize { width: 121px; }
.zoom { width: 109px; padding-right: 6px; }
.coords { width: 149px; padding-left: 33px; font-weight: 700; }
.warn { width: 79px; padding-left: 27px; gap: 6px; border-right: 0; }
.s1 { width: 16px; height: 16px; flex: none; }
.up { border: 3px solid transparent; border-bottom: 3px solid #22407c; border-top: 0; margin-left: -3px; }
```
